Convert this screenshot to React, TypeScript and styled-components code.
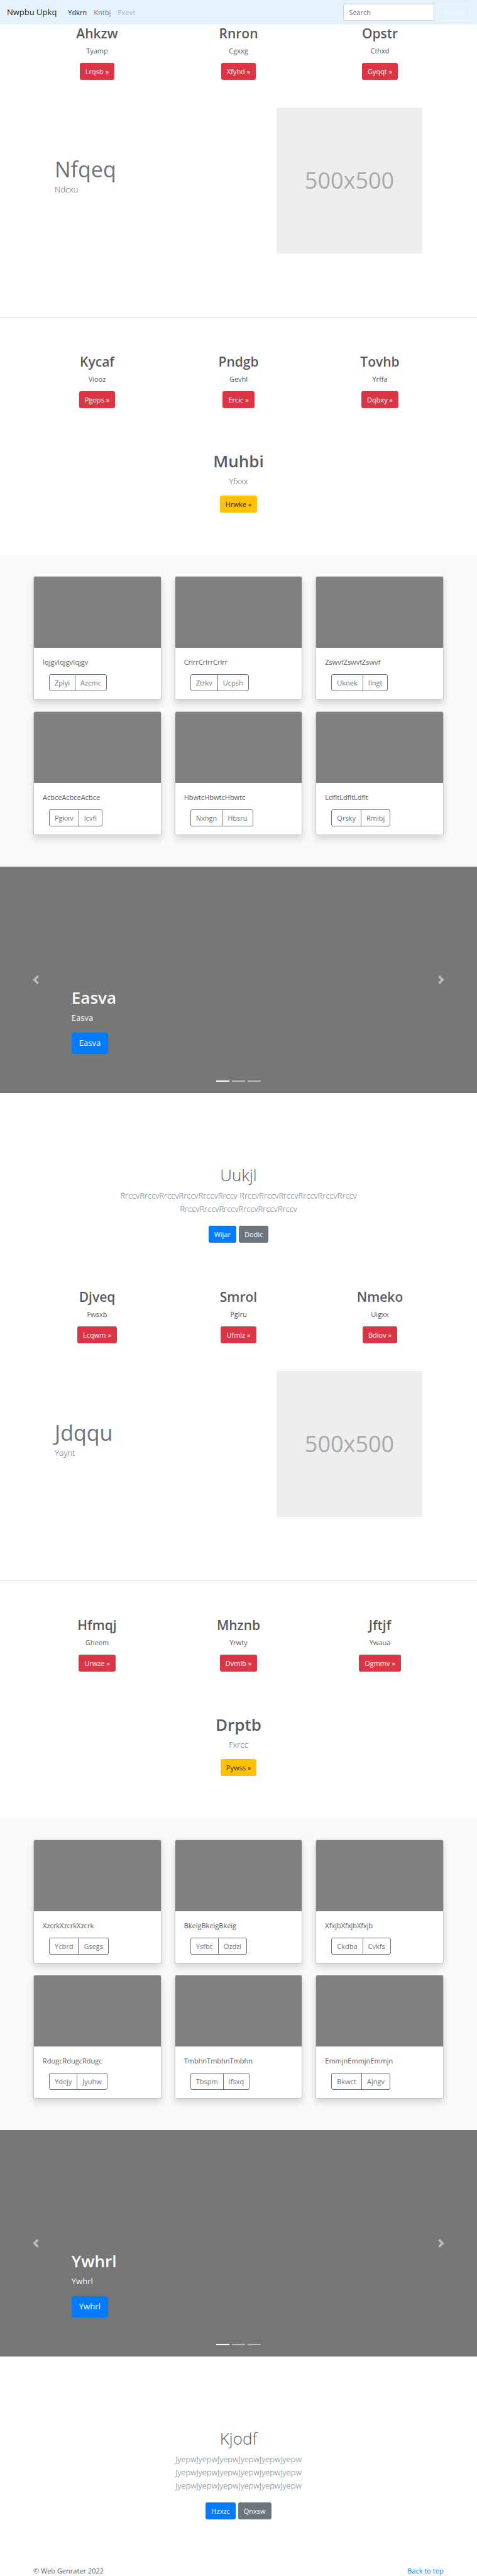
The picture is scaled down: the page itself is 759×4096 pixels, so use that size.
import React from "react";
import styled, { createGlobalStyle, css } from "styled-components";

const GlobalStyle = createGlobalStyle`
  *, *::before, *::after { box-sizing: border-box; }
  body {
    margin: 0;
    background: #fff;
    color: #5a5a5a;
    font-family: "Open Sans", "Noto Sans", sans-serif;
    font-size: 11px;
    line-height: 17px;
  }
  h1, h2, p { margin: 0; }
  a { color: #007bff; text-decoration: none; }
`;

const Navbar = styled.nav`
  display: flex;
  align-items: center;
  height: 39px;
  padding: 0 11px;
  background: #e3f2fd;
`;

const Brand = styled.a`
  margin-right: 18px;
  color: rgba(0, 0, 0, 0.9);
  font-size: 13px;
  line-height: 21px;
`;

const NavList = styled.ul`
  display: flex;
  flex: 1;
  gap: 11px;
  margin: 0;
  padding: 0;
  list-style: none;
`;

const NavLink = styled.a<{ $tone: number }>`
  color: rgba(0, 0, 0, ${(p) => p.$tone});
`;

const SearchForm = styled.form`
  display: flex;
  gap: 6px;
`;

const SearchInput = styled.input`
  width: 145px;
  height: 27px;
  padding: 0 8px;
  border: 1px solid #ced4da;
  border-radius: 3px;
  background: #fff;
  color: #495057;
  font: inherit;
  &::placeholder { color: #6c757d; opacity: 1; }
`;

const SearchButton = styled.button`
  height: 27px;
  padding: 0 7px;
  border: 1px solid #f8f9fa;
  border-radius: 3px;
  background: transparent;
  color: #f8f9fa;
  font: inherit;
`;

const tones = {
  danger: css`background: #dc3545; color: #fff;`,
  warning: css`background: #ffc107; color: #212529;`,
  primary: css`background: #007bff; color: #fff;`,
  secondary: css`background: #6c757d; color: #fff;`,
};

const ButtonLink = styled.a<{ $tone: keyof typeof tones; $large?: boolean }>`
  display: inline-block;
  padding: 5px 9px;
  border-radius: 3px;
  ${(p) => tones[p.$tone]}
  ${(p) => p.$large && css`
    padding: 6px 12px 7px;
    border-radius: 4px;
    font-size: 13px;
    line-height: 21px;
  `}
`;

const Container = styled.div`
  max-width: 675px;
  margin: 0 auto;
`;

const Columns = styled(Container)`
  display: grid;
  grid-template-columns: repeat(3, 1fr);
`;

const Column = styled.article`
  display: flex;
  flex-direction: column;
  align-items: center;
`;

const ColumnTitle = styled.h2`
  margin-bottom: 5px;
  font-size: 21px;
  font-weight: 600;
  line-height: 27px;
`;

const ColumnText = styled.p`
  margin-bottom: 11px;
`;

const Featurette = styled(Container)`
  display: flex;
  align-items: center;
  justify-content: space-between;
  padding: 44px 45px 101px;
`;

const FeaturetteText = styled.div`
  padding-bottom: 14px;
`;

const FeaturetteTitle = styled.h2`
  color: #6c757d;
  font-size: 34px;
  font-weight: 400;
  line-height: 43px;
`;

const Lead = styled.p`
  font-size: 13px;
  font-weight: 300;
  line-height: 21px;
`;

const Placeholder = styled.div`
  display: flex;
  align-items: center;
  justify-content: center;
  width: 232px;
  height: 232px;
  background: #eee;
  color: #aaa;
  font-size: 36px;
  line-height: 50px;
`;

const Divider = styled.hr`
  height: 1px;
  margin: 0 0 57px;
  border: 0;
  background: #e5e5e5;
`;

const Callout = styled.section`
  display: flex;
  flex-direction: column;
  align-items: center;
  padding: 67px 0;
`;

const CalloutTitle = styled.h1`
  margin-bottom: 5px;
  font-size: 26px;
  font-weight: 600;
  line-height: 34px;
`;

const CalloutText = styled(Lead)`
  margin-bottom: 12px;
`;

const Album = styled.section`
  padding: 34px 0 50px;
  background: #f8f9fa;
`;

const AlbumGrid = styled(Container)`
  display: grid;
  grid-template-columns: repeat(3, 1fr);
  gap: 18px 21px;
  padding: 0 11px;
`;

const Card = styled.article`
  overflow: hidden;
  border: 1px solid rgba(0, 0, 0, 0.125);
  border-radius: 3px;
  background: #fff;
  background-clip: padding-box;
  box-shadow: 0 6px 11px rgba(0, 0, 0, 0.15);
`;

const CardImage = styled.div`
  height: 113px;
  background: #808080;
`;

const CardBody = styled.div`
  padding: 14px 14px 13px;
`;

const ButtonGroup = styled.div`
  display: flex;
  margin: 11px 0 0 10px;
`;

const GroupButton = styled.button`
  height: 27px;
  padding: 0 8px;
  border: 1px solid #6c757d;
  background: #fff;
  color: #6c757d;
  font: inherit;
  &:first-child { border-radius: 3px 0 0 3px; }
  &:last-child { margin-left: -1px; border-radius: 0 3px 3px 0; }
`;

const Carousel = styled.section`
  display: grid;
  grid-template-columns: 15% 1fr 15%;
  height: 360px;
  background: #777;
  color: #fff;
`;

const CarouselControl = styled.button`
  display: flex;
  align-items: center;
  justify-content: center;
  padding: 0;
  border: 0;
  background: none;
  color: #fff;
  opacity: 0.5;
`;

const Slide = styled.div`
  display: flex;
  flex-direction: column;
  align-items: flex-start;
  justify-content: flex-end;
  padding-bottom: 18px;
`;

const SlideText = styled.p`
  margin-bottom: 13px;
  font-size: 13px;
  line-height: 21px;
`;

const Indicators = styled.div`
  display: flex;
  gap: 4px;
  align-self: center;
  margin-top: 42px;
`;

const Indicator = styled.button<{ $active: boolean }>`
  width: 21px;
  height: 2px;
  padding: 0;
  border: 0;
  background: #fff;
  opacity: ${(p) => (p.$active ? 1 : 0.5)};
`;

const Hero = styled.section`
  display: flex;
  flex-direction: column;
  align-items: center;
  padding: 113px 0 73px;
  text-align: center;
`;

const HeroTitle = styled.h1`
  margin-bottom: 6px;
  font-size: 26px;
  font-weight: 300;
  line-height: 34px;
`;

const HeroText = styled(Lead)`
  max-width: 400px;
  margin-bottom: 16px;
  color: #6c757d;
`;

const HeroActions = styled.div`
  display: flex;
  gap: 4px;
`;

const Footer = styled.footer`
  display: flex;
  justify-content: space-between;
  max-width: 675px;
  margin: 0 auto;
  padding: 0 11px;
`;

type Item = [title: string, text: string, action: string];
type CardItem = [text: string, first: string, second: string];

const Trio = ({ items }: { items: Item[] }) => (
  <Columns>
    {items.map(([title, text, action]) => (
      <Column key={title}>
        <ColumnTitle>{title}</ColumnTitle>
        <ColumnText>{text}</ColumnText>
        <ButtonLink href="#" $tone="danger">{action} »</ButtonLink>
      </Column>
    ))}
  </Columns>
);

const Chevron = ({ flip }: { flip?: boolean }) => (
  <svg width="14" height="14" viewBox="0 0 8 8" fill="currentColor" aria-hidden="true">
    {flip ? (
      <path d="M2.75 0l-1.5 1.5 2.5 2.5-2.5 2.5 1.5 1.5 4-4-4-4z" />
    ) : (
      <path d="M5.25 0l-4 4 4 4 1.5-1.5-2.5-2.5 2.5-2.5-1.5-1.5z" />
    )}
  </svg>
);

interface BlockData {
  top: Item[];
  feature: [string, string];
  middle: Item[];
  callout: Item;
  cards: CardItem[];
  slide: string;
  hero: { title: string; words: string; actions: [string, string] };
}

const Block = ({ top, feature, middle, callout, cards, slide, hero }: BlockData) => (
  <>
    <Trio items={top} />
    <Featurette>
      <FeaturetteText>
        <FeaturetteTitle>{feature[0]}</FeaturetteTitle>
        <Lead>{feature[1]}</Lead>
      </FeaturetteText>
      <Placeholder>500x500</Placeholder>
    </Featurette>
    <Divider />
    <Trio items={middle} />
    <Callout>
      <CalloutTitle>{callout[0]}</CalloutTitle>
      <CalloutText>{callout[1]}</CalloutText>
      <ButtonLink href="#" $tone="warning">{callout[2]} »</ButtonLink>
    </Callout>
    <Album>
      <AlbumGrid>
        {cards.map(([text, first, second]) => (
          <Card key={text}>
            <CardImage />
            <CardBody>
              <p>{text}</p>
              <ButtonGroup>
                <GroupButton type="button">{first}</GroupButton>
                <GroupButton type="button">{second}</GroupButton>
              </ButtonGroup>
            </CardBody>
          </Card>
        ))}
      </AlbumGrid>
    </Album>
    <Carousel>
      <CarouselControl type="button" aria-label="Previous"><Chevron /></CarouselControl>
      <Slide>
        <CalloutTitle>{slide}</CalloutTitle>
        <SlideText>{slide}</SlideText>
        <ButtonLink href="#" $tone="primary" $large>{slide}</ButtonLink>
        <Indicators>
          {[1, 2, 3].map((n) => (
            <Indicator key={n} type="button" aria-label={`Slide ${n}`} $active={n === 1} />
          ))}
        </Indicators>
      </Slide>
      <CarouselControl type="button" aria-label="Next"><Chevron flip /></CarouselControl>
    </Carousel>
    <Hero>
      <HeroTitle>{hero.title}</HeroTitle>
      <HeroText>{hero.words}</HeroText>
      <HeroActions>
        <ButtonLink href="#" $tone="primary">{hero.actions[0]}</ButtonLink>
        <ButtonLink href="#" $tone="secondary">{hero.actions[1]}</ButtonLink>
      </HeroActions>
    </Hero>
  </>
);

const Main = styled.main`
  padding-top: 1px;
`;

const paragraph = (word: string) => Array(3).fill(word.repeat(6)).join(" ");

const blocks: BlockData[] = [
  {
    top: [["Ahkzw", "Tyamp", "Lrqsb"], ["Rnron", "Cgxxg", "Xfyhd"], ["Opstr", "Cthxd", "Gyqqt"]],
    feature: ["Nfqeq", "Ndcxu"],
    middle: [["Kycaf", "Viooz", "Pgops"], ["Pndgb", "Gevhl", "Ercic"], ["Tovhb", "Yrffa", "Dqbxy"]],
    callout: ["Muhbi", "Yfxxx", "Hrwke"],
    cards: [
      ["IqjgvIqjgvIqjgv", "Zplyi", "Azcmc"],
      ["CrlrrCrlrrCrlrr", "Ztrkv", "Ucpsh"],
      ["ZswvfZswvfZswvf", "Uknek", "Ilngt"],
      ["AcbceAcbceAcbce", "Pgkxv", "Icvfi"],
      ["HbwtcHbwtcHbwtc", "Nxhgn", "Hbsru"],
      ["LdfltLdfltLdflt", "Qrsky", "Rmibj"],
    ],
    slide: "Easva",
    hero: { title: "Uukjl", words: paragraph("Rrccv"), actions: ["Wijar", "Dodic"] },
  },
  {
    top: [["Djveq", "Fwsxb", "Lcqwm"], ["Smrol", "Pglru", "Ufmlz"], ["Nmeko", "Uigxx", "Bdiov"]],
    feature: ["Jdqqu", "Yoynt"],
    middle: [["Hfmqj", "Gheem", "Urwze"], ["Mhznb", "Yrwty", "Dvmlb"], ["Jftjf", "Ywaua", "Ogmmv"]],
    callout: ["Drptb", "Fxrcc", "Pywss"],
    cards: [
      ["XzcrkXzcrkXzcrk", "Ycbrd", "Gsegs"],
      ["BkeigBkeigBkeig", "Ysfbc", "Ozdzl"],
      ["XfxjbXfxjbXfxjb", "Ckdba", "Cvkfs"],
      ["RdugcRdugcRdugc", "Ydejy", "Jyuhw"],
      ["TmbhnTmbhnTmbhn", "Tbspm", "Ifsxq"],
      ["EmmjnEmmjnEmmjn", "Bkwct", "Ajngv"],
    ],
    slide: "Ywhrl",
    hero: { title: "Kjodf", words: paragraph("Jyepw"), actions: ["Hzxzc", "Qnxsw"] },
  },
];

export default function App() {
  return (
    <>
      <GlobalStyle />
      <Navbar>
        <Brand href="#">Nwpbu Upkq</Brand>
        <NavList>
          <li><NavLink href="#" $tone={0.9}>Ydkrn</NavLink></li>
          <li><NavLink href="#" $tone={0.5}>Kntbj</NavLink></li>
          <li><NavLink href="#" $tone={0.3}>Pxevt</NavLink></li>
        </NavList>
        <SearchForm>
          <SearchInput type="search" placeholder="Search" aria-label="Search" />
          <SearchButton type="button">Search</SearchButton>
        </SearchForm>
      </Navbar>
      <Main>
        {blocks.map((block) => <Block key={block.slide} {...block} />)}
      </Main>
      <Footer>
        <p>© Web Genrater 2022</p>
        <a href="#">Back to top</a>
      </Footer>
    </>
  );
}
